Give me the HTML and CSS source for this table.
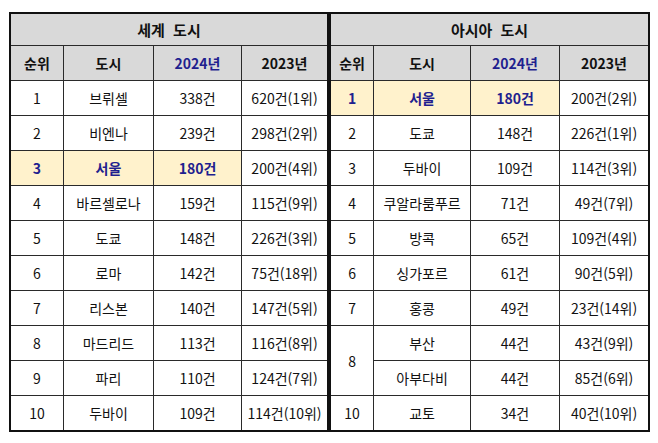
FILE: index.html
```html
<!DOCTYPE html>
<html lang="ko">
<head>
<meta charset="utf-8">
<link rel="stylesheet" href="styles.css">
</head>
<body>
<div class="wrap">
  <table class="tbl tbl-world">
    <colgroup><col class="c1"><col class="c2"><col class="c3"><col class="c4"></colgroup>
    <thead>
      <tr class="title"><th colspan="4">세계 도시</th></tr>
      <tr class="head"><th>순위</th><th>도시</th><th class="blue">2024년</th><th>2023년</th></tr>
    </thead>
    <tbody>
      <tr><td>1</td><td>브뤼셀</td><td>338건</td><td>620건(1위)</td></tr>
      <tr><td>2</td><td>비엔나</td><td>239건</td><td>298건(2위)</td></tr>
      <tr class="hl"><td class="y">3</td><td class="y">서울</td><td class="y">180건</td><td>200건(4위)</td></tr>
      <tr><td>4</td><td>바르셀로나</td><td>159건</td><td>115건(9위)</td></tr>
      <tr><td>5</td><td>도쿄</td><td>148건</td><td>226건(3위)</td></tr>
      <tr><td>6</td><td>로마</td><td>142건</td><td>75건(18위)</td></tr>
      <tr><td>7</td><td>리스본</td><td>140건</td><td>147건(5위)</td></tr>
      <tr><td>8</td><td>마드리드</td><td>113건</td><td>116건(8위)</td></tr>
      <tr><td>9</td><td>파리</td><td>110건</td><td>124건(7위)</td></tr>
      <tr class="last"><td>10</td><td>두바이</td><td>109건</td><td>114건(10위)</td></tr>
    </tbody>
  </table>
  <table class="tbl tbl-asia">
    <colgroup><col class="c1"><col class="c2"><col class="c3"><col class="c4"></colgroup>
    <thead>
      <tr class="title"><th colspan="4">아시아 도시</th></tr>
      <tr class="head"><th>순위</th><th>도시</th><th class="blue">2024년</th><th>2023년</th></tr>
    </thead>
    <tbody>
      <tr class="hl"><td class="y">1</td><td class="y">서울</td><td class="y">180건</td><td>200건(2위)</td></tr>
      <tr><td>2</td><td>도쿄</td><td>148건</td><td>226건(1위)</td></tr>
      <tr><td>3</td><td>두바이</td><td>109건</td><td>114건(3위)</td></tr>
      <tr><td>4</td><td>쿠알라룸푸르</td><td>71건</td><td>49건(7위)</td></tr>
      <tr><td>5</td><td>방콕</td><td>65건</td><td>109건(4위)</td></tr>
      <tr><td>6</td><td>싱가포르</td><td>61건</td><td>90건(5위)</td></tr>
      <tr><td>7</td><td>홍콩</td><td>49건</td><td>23건(14위)</td></tr>
      <tr><td rowspan="2">8</td><td>부산</td><td>44건</td><td>43건(9위)</td></tr>
      <tr><td>아부다비</td><td>44건</td><td>85건(6위)</td></tr>
      <tr class="last"><td>10</td><td>교토</td><td>34건</td><td>40건(10위)</td></tr>
    </tbody>
  </table>
</div>
</body>
</html>
```

FILE: styles.css
```css
html, body {
  margin: 0;
  padding: 0;
  background: #ffffff;
}

.wrap {
  display: flex;
  padding: 12px 0 0 9px;
}

.tbl {
  border-collapse: separate;
  border-spacing: 0;
  table-layout: fixed;
  border: 2px solid #111111;
  font-family: "Noto Sans CJK KR", "Noto Sans", sans-serif;
  font-size: 14px;
  color: #111111;
}

.tbl-world { width: 320px; }
.tbl-world .c1 { width: 53px; }
.tbl-world .c2 { width: 90px; }
.tbl-world .c3 { width: 88px; }
.tbl-world .c4 { width: 85px; }

.tbl-asia { width: 321px; }
.tbl-asia .c1 { width: 43px; }
.tbl-asia .c2 { width: 97px; }
.tbl-asia .c3 { width: 89px; }
.tbl-asia .c4 { width: 88px; }

.tbl th, .tbl td {
  box-sizing: border-box;
  padding: 0;
  text-align: center;
  vertical-align: middle;
  border-right: 1px solid #2a2a2a;
  border-bottom: 1px solid #2a2a2a;
  height: 35px;
  line-height: 20px;
  white-space: nowrap;
}

.tbl th:last-child, .tbl td:last-child { border-right: none; }
.tbl .last td { border-bottom: none; height: 34px; }
.tbl td[rowspan] { border-right: 1px solid #2a2a2a; }

.title th {
  background: #d9d9d9;
  height: 32px;
  font-size: 15px;
  font-weight: 700;
  word-spacing: 4px;
  color: #111111;
}

.head th {
  background: #d9d9d9;
  font-weight: 700;
  color: #111111;
}

.blue { color: #1f1f8f !important; }

.hl .y {
  background: #fff2cc;
  color: #1f1f8f;
  font-weight: 700;
}
```
